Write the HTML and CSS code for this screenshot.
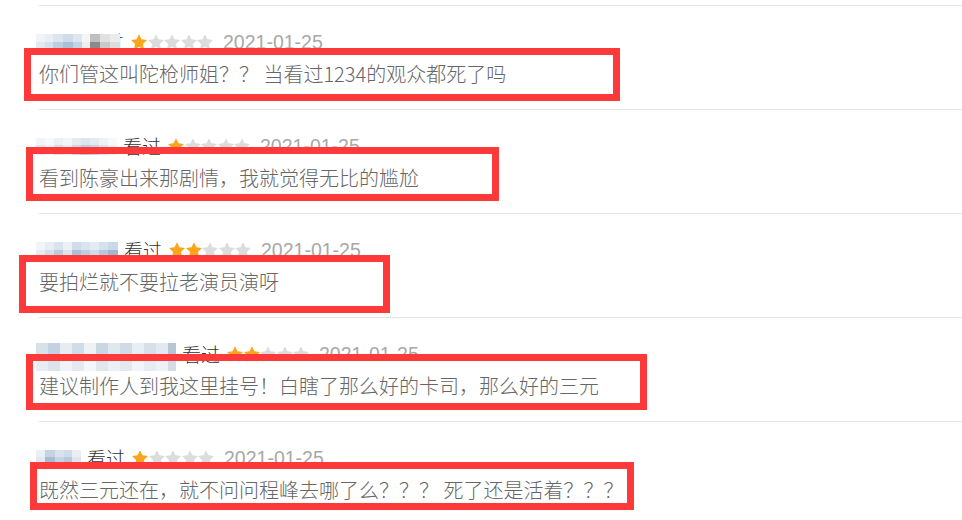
FILE: index.html
```html
<!DOCTYPE html>
<html>
<head>
	<meta charset="utf-8">
	<title>短评</title>
	<link rel="stylesheet" href="styles.css">
</head>
<body>

<svg class="defs" aria-hidden="true">
	<symbol id="star" viewBox="0 0 16 16">
		<polygon points="8,0.2 10.47,5.2 16,6 11.99,9.9 12.94,15.4 8,12.8 3.06,15.4 4.01,9.9 0,6 5.53,5.2"/>
	</symbol>
</svg>

<div class="comments">

	<div class="comment">
		<div class="meta">
			<span class="blur blur-1"></span>
			<span class="watched under">看过</span>
			<span class="stars">
				<svg class="star on"><use href="#star"/></svg>
				<svg class="star"><use href="#star"/></svg>
				<svg class="star"><use href="#star"/></svg>
				<svg class="star"><use href="#star"/></svg>
				<svg class="star"><use href="#star"/></svg>
			</span>
			<span class="date">2021-01-25</span>
		</div>
		<p class="text">你们管这叫陀枪师姐？？ 当看过1234的观众都死了吗</p>
		<div class="mark mark-1"></div>
	</div>

	<div class="comment">
		<div class="meta">
			<span class="blur blur-2"></span>
			<span class="watched">看过</span>
			<span class="stars">
				<svg class="star on"><use href="#star"/></svg>
				<svg class="star"><use href="#star"/></svg>
				<svg class="star"><use href="#star"/></svg>
				<svg class="star"><use href="#star"/></svg>
				<svg class="star"><use href="#star"/></svg>
			</span>
			<span class="date">2021-01-25</span>
		</div>
		<p class="text">看到陈豪出来那剧情，我就觉得无比的尴尬</p>
		<div class="mark mark-2"></div>
	</div>

	<div class="comment">
		<div class="meta">
			<span class="blur blur-3"></span>
			<span class="watched">看过</span>
			<span class="stars">
				<svg class="star on"><use href="#star"/></svg>
				<svg class="star on"><use href="#star"/></svg>
				<svg class="star"><use href="#star"/></svg>
				<svg class="star"><use href="#star"/></svg>
				<svg class="star"><use href="#star"/></svg>
			</span>
			<span class="date">2021-01-25</span>
		</div>
		<p class="text">要拍烂就不要拉老演员演呀</p>
		<div class="mark mark-3"></div>
	</div>

	<div class="comment">
		<div class="meta">
			<span class="blur blur-4"></span>
			<span class="watched">看过</span>
			<span class="stars">
				<svg class="star on"><use href="#star"/></svg>
				<svg class="star on"><use href="#star"/></svg>
				<svg class="star"><use href="#star"/></svg>
				<svg class="star"><use href="#star"/></svg>
				<svg class="star"><use href="#star"/></svg>
			</span>
			<span class="date">2021-01-25</span>
		</div>
		<p class="text">建议制作人到我这里挂号！白瞎了那么好的卡司，那么好的三元</p>
		<div class="mark mark-4"></div>
	</div>

	<div class="comment">
		<div class="meta">
			<span class="blur blur-5"></span>
			<span class="watched">看过</span>
			<span class="stars">
				<svg class="star on"><use href="#star"/></svg>
				<svg class="star"><use href="#star"/></svg>
				<svg class="star"><use href="#star"/></svg>
				<svg class="star"><use href="#star"/></svg>
				<svg class="star"><use href="#star"/></svg>
			</span>
			<span class="date">2021-01-25</span>
		</div>
		<p class="text">既然三元还在，就不问问程峰去哪了么？？？ 死了还是活着？？？</p>
		<div class="mark mark-5"></div>
	</div>

</div>

</body>
</html>
```

FILE: styles.css
```css
body {
	margin: 0;
	padding: 0;
	background: #fff;
	font-family: "Noto Sans CJK SC", "Liberation Sans", sans-serif;
	overflow: hidden;
}

.defs {
	position: absolute;
	width: 0;
	height: 0;
}

.comments {
	padding-top: 5px;
	margin-left: 39px;
}

.comment {
	position: relative;
	box-sizing: border-box;
	height: 104px;
	border-top: 1px solid #e4e4e4;
}

.meta {
	display: flex;
	align-items: center;
	height: 22px;
	margin-top: 25px;
	white-space: nowrap;
}

.blur {
	position: relative;
	z-index: 1;
	flex: none;
	height: 17px;
	margin-left: -3px;
}

.blur-1 {
	width: 84px;
	background:
		linear-gradient(180deg, rgba(255,255,255,0.45) 0 45%, rgba(255,255,255,0) 45%),
		linear-gradient(90deg, #e3e9f0 0 9px, #d6e0ea 9px 17px, #bccfe1 17px 27px, #a8c1d8 27px 37px, #c2d3e3 37px 46px, #eeeeee 46px 54px, #8b8b8b 54px 64px, #c9c9c9 64px 74px, #dcdcdc 74px 84px);
}

.blur-2 {
	width: 81px;
	background:
		linear-gradient(180deg, rgba(255,255,255,0.5) 0 40%, rgba(255,255,255,0) 40%),
		linear-gradient(90deg, #e2e9f1 0 9px, #eef2f6 9px 18px, #d5e0eb 18px 27px, #e7edf3 27px 36px, #c8d7e6 36px 45px, #b7cbdf 45px 54px, #c4d4e4 54px 63px, #dbe4ee 63px 72px, #eef2f6 72px 81px);
}

.blur-3 {
	width: 82px;
	background:
		linear-gradient(180deg, rgba(255,255,255,0.45) 0 45%, rgba(255,255,255,0) 45%),
		linear-gradient(90deg, #e6ecf2 0 9px, #d2deea 9px 18px, #b9ccde 18px 27px, #dce5ee 27px 36px, #a9c1d8 36px 45px, #bccee0 45px 54px, #cfdbe8 54px 63px, #b3c8dc 63px 72px, #9fb9d2 72px 82px);
}

.blur-4 {
	width: 140px;
	height: 28px;
	margin-top: 6px;
	background:
		linear-gradient(180deg, rgba(255,255,255,0) 0 50%, rgba(255,255,255,0.4) 50%),
		linear-gradient(90deg, #d7e1ea 0 12px, #c3d2e1 12px 24px, #e6ecf2 24px 36px, #d0dce8 36px 48px, #eef2f6 48px 60px, #c9d7e5 60px 72px, #dfe7ef 72px 84px, #cfdbe7 84px 96px, #e8eef4 96px 108px, #d5e0ea 108px 120px, #e3e9f0 120px 132px, #b8c6d4 132px 140px);
}

.blur-5 {
	width: 45px;
	background:
		linear-gradient(180deg, rgba(255,255,255,0.35) 0 40%, rgba(255,255,255,0) 40%),
		linear-gradient(90deg, #e1e8ef 0 9px, #a6bdd3 9px 19px, #c4d4e3 19px 28px, #b7cadd 28px 36px, #dde6ef 36px 45px);
}

.watched {
	margin-left: 6px;
	font-size: 19px;
	font-weight: 300;
	line-height: 22px;
	color: #333;
}

.watched.under {
	margin-left: -34px;
}

.stars {
	display: flex;
	gap: 0.5px;
	margin-left: 7px;
}

.star {
	width: 16px;
	height: 16px;
	fill: #dcdcdc;
}

.star.on {
	fill: #fba51c;
}

.date {
	margin-left: 10px;
	font-family: "Liberation Sans", Arial, sans-serif;
	font-size: 19.5px;
	line-height: 22px;
	color: #a8a8a8;
}

.text {
	margin: 7px 0 0;
	font-size: 20px;
	font-weight: 300;
	line-height: 28px;
	color: #666;
	white-space: nowrap;
}

/* hand-drawn red highlight boxes */
.mark {
	position: absolute;
	z-index: 2;
	box-sizing: border-box;
	border: 7px solid #fd3939;
}

.mark-1 { top: 42px; left: -15px; width: 596px; height: 53px; }
.mark-2 { top: 37px; left: -13px; width: 473px; height: 54px; }
.mark-3 { top: 41px; left: -20px; width: 371px; height: 58px; }
.mark-4 { top: 36px; left: -13px; width: 621px; height: 56px; }
.mark-5 { top: 40px; left: -9px; width: 604px; height: 48px; }
```
